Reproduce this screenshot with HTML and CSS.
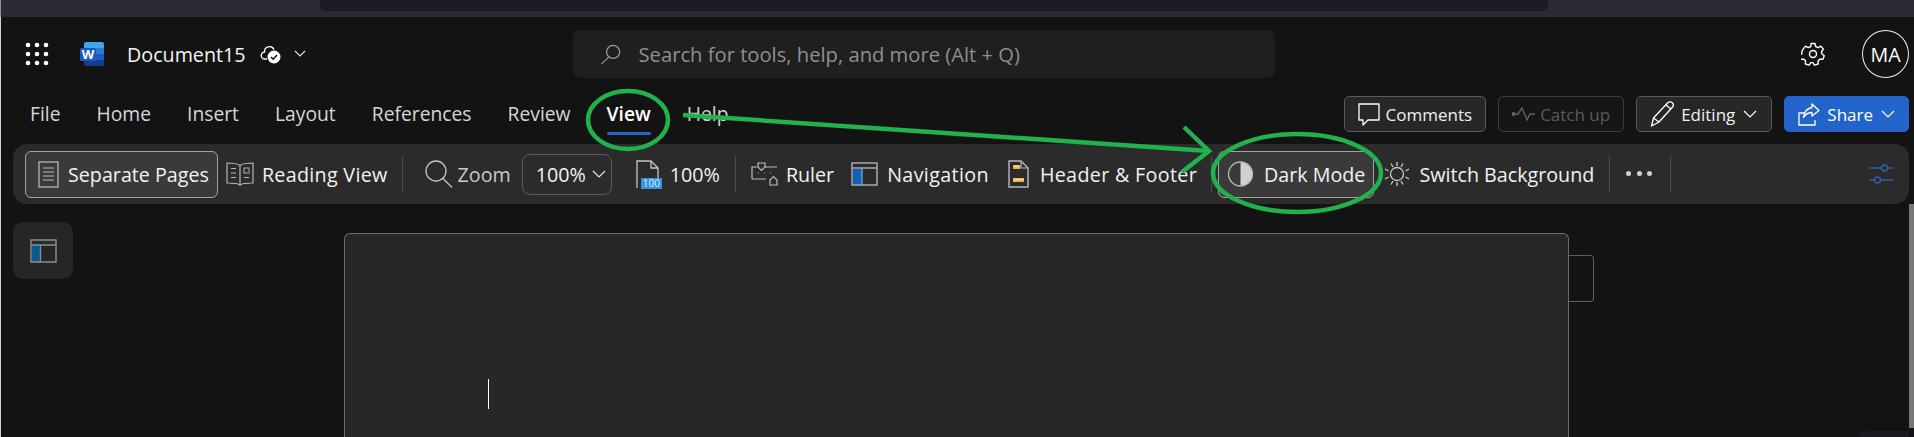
FILE: index.html
```html
<!DOCTYPE html>
<html lang="en">
<head>
<meta charset="utf-8">
<title>Document15 - Word</title>
<link rel="stylesheet" href="styles.css">
</head>
<body>
<div class="strip"><div class="strip-panel"></div></div>
<div class="app">
  <header class="titlebar">
    <svg class="waffle" width="24" height="24" viewBox="0 0 24 24" fill="#fff"><circle cx="3" cy="3" r="2.300"/><circle cx="12" cy="3" r="2.300"/><circle cx="21" cy="3" r="2.300"/><circle cx="3" cy="12" r="2.300"/><circle cx="12" cy="12" r="2.300"/><circle cx="21" cy="12" r="2.300"/><circle cx="3" cy="21" r="2.300"/><circle cx="12" cy="21" r="2.300"/><circle cx="21" cy="21" r="2.300"/></svg>
    <svg class="wordlogo" width="24" height="24" viewBox="0 0 24 24"><path d="M6 0h16a2 2 0 0 1 2 2v4H4V2a2 2 0 0 1 2-2z" fill="#41a5ee"/><rect x="4" y="6" width="20" height="6" fill="#2b7cd3"/><rect x="4" y="12" width="20" height="6" fill="#185abd"/><path d="M4 18h20v4a2 2 0 0 1-2 2H6a2 2 0 0 1-2-2z" fill="#103f91"/><rect x="0" y="6" width="16" height="13" rx="1.500" fill="#185abd"/><text x="8" y="17" class="wordlogo-w">W</text></svg>
    <span class="docname">Document15</span>
    <svg class="cloud" width="22" height="20" viewBox="0 0 22 20" fill="none"><path d="M7 15H5a3.500 3.500 0 0 1-.5-7A5 5 0 0 1 14 5.500" stroke="#fff" stroke-width="1.400"/><circle cx="14" cy="13" r="6.500" fill="#fff"/><path d="M11 13l2.200 2.200L17 11" stroke="#131313" stroke-width="1.600"/></svg>
    <svg class="chev chev-doc" width="12" height="8" viewBox="0 0 12 8" fill="none"><path d="M1 1l5 5 5-5" stroke="#ddd" stroke-width="1.200"/></svg>
    <div class="search">
      <svg width="21" height="21" viewBox="0 0 24 24" fill="none" stroke="#9a9a9a" stroke-width="1.400"><circle cx="15" cy="9" r="7.500"/><path d="M10 15L1.500 23"/></svg>
      <span>Search for tools, help, and more (Alt + Q)</span>
    </div>
    <div class="title-right">
      <svg width="24" height="24" viewBox="0 0 24 24" fill="none" stroke="#fff" stroke-width="1.400" stroke-linejoin="round"><circle cx="12" cy="12" r="3.500"/><path d="M10 1.500h4l.7 3 2.500 1.100 2.700-1.500 2.500 3-1.800 2.400.3 2.500 2.400 1.700-1.400 3.600-3-.2-1.800 1.900.1 3-3.700 1.100-1.700-2.500h-2l-1.700 2.500-3.700-1.100.1-3-1.800-1.900-3 .2-1.400-3.600 2.400-1.700.3-2.500L2.100 7.100l2.500-3 2.700 1.500 2.500-1.100z"/></svg>
      <div class="avatar">MA</div>
    </div>
  </header>

  <div class="tabsrow">
    <nav class="tabs">
      <span class="tab">File</span>
      <span class="tab">Home</span>
      <span class="tab">Insert</span>
      <span class="tab">Layout</span>
      <span class="tab">References</span>
      <span class="tab">Review</span>
      <span class="tab tab-active">View</span>
      <span class="tab">Help</span>
    </nav>
    <div class="actions">
      <button class="act act-comments">
        <svg width="22" height="24" viewBox="0 0 22 24" fill="none" stroke="#fff" stroke-width="1.300"><path d="M1 2h20v16H10l-5 5v-5H1z" stroke-linejoin="round"/></svg>
        Comments
      </button>
      <button class="act act-off">
        <svg width="23" height="16" viewBox="0 0 23 16" fill="none" stroke="#666" stroke-width="1.300"><circle cx="1.500" cy="8" r="1.300" fill="#666"/><path d="M3 8h3l4-6 5 12 3-6h5"/></svg>
        Catch up
      </button>
      <button class="act act-edit">
        <svg width="24" height="26" viewBox="0 0 24 26" fill="none" stroke="#fff" stroke-width="1.300" stroke-linejoin="round"><path d="M1.500 25l2-8L17.500 2a3 3 0 0 1 5 4L9 21z"/><path d="M3.500 17L9 21M16 4l5 4"/></svg>
        Editing
        <svg class="chev chev-act" width="14" height="9" viewBox="0 0 14 9" fill="none"><path d="M1 1l6 6 6-6" stroke="#fff" stroke-width="1.200"/></svg>
      </button>
      <button class="act act-share">
        <svg width="22" height="24" viewBox="0 0 22 24" fill="none" stroke="#fff" stroke-width="1.300" stroke-linejoin="round"><path d="M7 11H1v12h16v-5"/><path d="M14 2l7 6.500L14 14v-3.500c-4 0-6.500 1.500-8.500 5 .5-6 3.500-9 8.500-10z"/></svg>
        Share
        <svg class="chev chev-act" width="14" height="9" viewBox="0 0 14 9" fill="none"><path d="M1 1l6 6 6-6" stroke="#fff" stroke-width="1.200"/></svg>
      </button>
    </div>
  </div>

  <div class="ribbon">
    <button class="rb rb-on rb-pages">
      <svg width="21" height="27" viewBox="0 0 21 27" fill="none" stroke="#b5b5b5" stroke-width="1.300"><rect x="1" y="1" width="19" height="25"/><path d="M5 7h11M5 11h11M5 15h11M5 19h11" stroke="#8f8f8f" stroke-width="1.500"/></svg>
      Separate Pages
    </button>
    <button class="rb rb-read">
      <svg width="28" height="24" viewBox="0 0 28 24" fill="none" stroke="#b5b5b5" stroke-width="1.200"><path d="M14 3.500C12 2 8 1 1 1v20c7 0 11 0 13 2 2-2 6-2 13-2V1c-7 0-11 1-13 2.500zM14 3.500V23"/><path d="M5 6.500h5M5 11h5M5 15.500h5M18 15.500h5"/><rect x="18" y="6" width="5" height="5" stroke="#999"/></svg>
      Reading View
    </button>
    <i class="sep sep-a"></i>
    <button class="rb rb-zoomlabel">
      <svg width="28" height="28" viewBox="0 0 28 28" fill="none" stroke="#c4c4c4" stroke-width="1.300"><circle cx="11" cy="11" r="10"/><path d="M18 18.500L27 27.500"/></svg>
      Zoom
    </button>
    <div class="zoomsel">100%
      <svg class="chev" width="14" height="9" viewBox="0 0 14 9" fill="none"><path d="M1 1l6 6 6-6" stroke="#e6e6e6" stroke-width="1.200"/></svg>
    </div>
    <div class="rb rb-page100">
      <span class="pageicon">
        <svg width="24" height="29" viewBox="0 0 24 29" fill="none" stroke="#c4c4c4" stroke-width="1.300"><path d="M1 28V1h14l7 7v10M15 1v7h7"/></svg>
        <span class="badge100">100</span>
      </span>
      100%
    </div>
    <i class="sep sep-b"></i>
    <button class="rb rb-ruler">
      <svg width="27" height="24" viewBox="0 0 27 24" fill="none" stroke="#bdbdbd" stroke-width="1.200"><path d="M1 17V5h5M14 5h12M1 17h14"/><path d="M7 1h7v4l-3.500 3.500L7 5z"/><path d="M19 23v-5l3.500-3.500L26 18v5z"/><path d="M7 11h.5M13 11h.5M19 11h.5" stroke-width="1.400"/></svg>
      Ruler
    </button>
    <button class="rb rb-nav">
      <svg width="27" height="24" viewBox="0 0 27 24" fill="none"><rect x="2" y="7" width="9" height="16" fill="#0f62b8"/><path d="M1 1h25v22H1zM1 6h25" stroke="#a9a9a9" stroke-width="1.500"/><path d="M11 6v17" stroke="#6fb0e6" stroke-width="1.200"/></svg>
      Navigation
    </button>
    <button class="rb rb-header">
      <svg width="21" height="28" viewBox="0 0 21 28" fill="none"><path d="M1 27V1h12l7 7v19z" stroke="#b9b9b9" stroke-width="1.400"/><path d="M13 1v7h7" stroke="#b9b9b9" stroke-width="1.200"/><rect x="5" y="5" width="7" height="4" fill="#eeb457"/><rect x="5" y="18" width="11" height="4" fill="#eeb457"/><path d="M6 6.500h5M6 19.500h9" stroke="#fbe3b3"/></svg>
      Header &amp; Footer
    </button>
    <i class="sep sep-c"></i>
    <button class="rb rb-on rb-dark">
      <svg width="27" height="26" viewBox="0 0 27 26" fill="none"><path d="M13.500 1a12 12 0 0 1 0 24z" fill="#d0d0d0"/><circle cx="13.500" cy="13" r="12" stroke="#b5b5b5" stroke-width="1.300"/></svg>
      Dark Mode
    </button>
    <button class="rb rb-sun">
      <svg width="26" height="26" viewBox="0 0 26 26" fill="none" stroke="#c9c9c9" stroke-width="1.300"><circle cx="13" cy="13" r="6.500"/><path d="M13 1v4M13 21v4M7 2.500l2 3.500M19 2.500l-2 3.500M7 23.500l2-3.500M19 23.500l-2-3.500M1 8l3.500 2M25 8l-3.500 2M1 18l3.500-2M25 18l-3.500-2"/></svg>
      Switch Background
    </button>
    <i class="sep sep-d"></i>
    <div class="more"><i></i><i></i><i></i></div>
    <i class="sep"></i>
    <svg class="tune" width="24" height="20" viewBox="0 0 24 20" fill="none" stroke="#2d5faf" stroke-width="1.500"><path d="M0 4h12M19 4h5M0 16h5M12 16h12"/><circle cx="15.500" cy="4" r="3"/><circle cx="8.500" cy="16" r="3"/></svg>
  </div>

  <main class="workspace">
    <div class="sidetool">
      <svg width="27" height="24" viewBox="0 0 27 24" fill="none"><rect x="2" y="6" width="8.500" height="17" fill="#055a96"/><rect x="1" y="1" width="25" height="5" fill="#2c2c2c"/><path d="M1 1h25v22H1zM1 6h25M10.500 6v17" stroke="#8d8d8d" stroke-width="1.400"/></svg>
    </div>
    <div class="pagewrap">
      <div class="page"><i class="caret"></i></div>
      <div class="pagetab"></div>
    </div>
  </main>
  <div class="scrollbar"></div>
  <div class="cornerpanel"></div>
</div>
<svg class="annot" width="1914" height="437" viewBox="0 0 1914 437" fill="none" stroke="#21b14d" stroke-width="4.500">
  <ellipse cx="628" cy="120" rx="40" ry="29"/>
  <path d="M683 115L1209 151"/>
  <path d="M1184 127L1209 151L1182 172"/>
  <ellipse cx="1297" cy="173" rx="84" ry="39"/>
</svg>
</body>
</html>
```

FILE: styles.css
```css
* { box-sizing: border-box; }
html, body { margin: 0; height: 100%; }
body {
  position: relative;
  width: 1914px; height: 437px; overflow: hidden;
  background: #131313; color: #fff;
  font-family: "Open Sans", "Noto Sans", sans-serif;
  display: flex; flex-direction: column;
}
button { font: inherit; color: inherit; background: none; border: 0; padding: 0; }
.strip { height: 17px; background: #2a2a35; flex: none; padding: 0 366px 0 319px; border-left: 1px solid #8b93a1; }
.strip-panel { height: 11px; background: #1b1b22; border-radius: 0 0 6px 6px; }
.app { position: relative; flex: 1; border-left: 1px solid #c8d3e0; background: #131313; display: flex; flex-direction: column; overflow: hidden; }

.titlebar { height: 48px; flex: none; display: flex; align-items: center; padding: 0 5px 0 23.500px; margin-top: 13px; }
.waffle, .wordlogo, .cloud { flex: none; }
.wordlogo { margin-left: 31px; }
.wordlogo-w { font-size: 13px; font-weight: 700; fill: #fff; text-anchor: middle; }
.docname { margin-left: 23.500px; font-size: 19.700px; color: #f4f4f4; }
.cloud { margin-left: 14px; }
.chev { flex: none; }
.chev-doc { margin-left: 12px; }
.search { margin-left: 267px; width: 702px; height: 48px; background: #1f1f1f; border-radius: 8px; display: flex; align-items: center; padding-left: 27px; gap: 18px; color: #8f8f8f; font-size: 20.200px; flex: none; }
.title-right { margin-left: auto; display: flex; align-items: center; gap: 37px; }
.avatar { width: 47px; height: 48px; border: 1px solid #eee; border-radius: 50%; display: flex; align-items: center; justify-content: center; font-size: 19.700px; }

.tabsrow { height: 36px; flex: none; display: flex; align-items: center; justify-content: space-between; padding: 0 5px 0 29px; margin-top: 18px; }
.tabs { display: flex; gap: 36px; }
.tab { position: relative; font-size: 19.300px; color: #d6d6d6; line-height: 26px; }
.tab-active { color: #fff; font-weight: 600; }
.tab-active::after { content: ""; position: absolute; left: 0; right: 0; bottom: -8px; height: 3px; background: #2766c9; border-radius: 2px; }
.actions { display: flex; gap: 12px; }
.act { height: 36px; padding: 0 13px; border: 1px solid #5a5a5a; border-radius: 5px; background: #272727; display: flex; align-items: center; gap: 6px; font-size: 17px; color: #f0f0f0; }
.act-off { border-color: #3b3b3b; background: #161616; color: #5a5a5a; gap: 5px; }
.act-edit { gap: 7px; padding-right: 14px; }
.act-share { background: #2364ca; border-color: #2364ca; color: #fff; gap: 7px; padding-right: 13px; }
.chev-act { margin-left: 1px; }

.ribbon { height: 60px; flex: none; margin: 12px 5px 0 12px; padding: 0 16px 0 12px; background: #2b2b2b; border-radius: 14px; display: flex; align-items: center; }
.rb { height: 47px; display: flex; align-items: center; gap: 8px; font-size: 19.700px; color: #f2f2f2; border: 1px solid transparent; border-radius: 6px; padding: 0 7px; white-space: nowrap; flex: none; }
.rb-on { background: #3a3a3a; border-color: #a3a3a3; }
.rb-pages { padding: 0 8px 0 12px; gap: 9px; }
.rb-read { letter-spacing: 0.300px; }
.rb-zoomlabel { color: #c9c9c9; gap: 5px; }
.zoomsel { height: 41px; display: flex; align-items: center; gap: 6px; padding: 0 5px 0 13px; margin-left: 3px; border: 1px solid #5b5b5b; border-radius: 8px; font-size: 19.700px; color: #f2f2f2; flex: none; }
.rb-page100 { margin-left: 16px; }
.pageicon { position: relative; display: block; width: 26px; height: 29px; }
.badge100 { position: absolute; left: 5px; bottom: 0; width: 21px; height: 11px; background: #3a92dd; color: #d9efff; font-size: 10px; line-height: 11px; text-align: center; }
.sep { width: 1px; height: 36px; background: #4c4c4c; flex: none; margin: 0 8px; }
.sep-a { margin: 0 14px 0 6px; }
.sep-b { margin: 0 7px 0 7px; }
.sep-c { margin: 0 6px 0 6px; }
.sep-d { margin: 0 16px 0 7px; }
.rb-nav { margin-left: 1px; gap: 9px; letter-spacing: 0.360px; }
.rb-header { margin-left: 3px; gap: 11px; letter-spacing: 0.330px; }
.rb-dark { padding: 0 8px; gap: 10px; }
.rb-sun { margin-left: 2px; gap: 9px; }
.more { display: flex; gap: 5.500px; margin-right: 10px; height: 20px; align-items: center; margin-top: -2px; }
.more i { width: 5px; height: 5px; border-radius: 50%; background: #d0d0d0; }
.tune { margin-left: auto; flex: none; }

.workspace { position: relative; flex: 1; display: flex; padding: 18px 0 0 12px; }
.sidetool { width: 60px; height: 57px; background: #262626; border-radius: 10px; display: flex; align-items: center; justify-content: center; flex: none; }
.pagewrap { display: flex; align-items: flex-start; margin-left: 271px; padding-top: 11px; }
.page { position: relative; width: 1225px; height: 220px; background: #272727; border: 1px solid #6a6a6a; border-bottom: 0; border-radius: 6px 6px 0 0; flex: none; }
.caret { position: absolute; left: 143px; top: 145px; width: 1px; height: 30px; background: #fff; }
.pagetab { width: 25px; height: 47px; margin-top: 22px; border: 1px solid #5f5f5f; border-left: 0; border-radius: 0 4px 4px 0; flex: none; }

.annot { position: absolute; left: 0; top: 0; pointer-events: none; }
.scrollbar { position: absolute; right: 0; top: 187px; width: 5px; height: 224px; background: #777; }
.cornerpanel { position: absolute; right: 5px; bottom: 0; width: 50px; height: 6px; background: #1a1a20; border-radius: 8px 0 0 0; }
```
